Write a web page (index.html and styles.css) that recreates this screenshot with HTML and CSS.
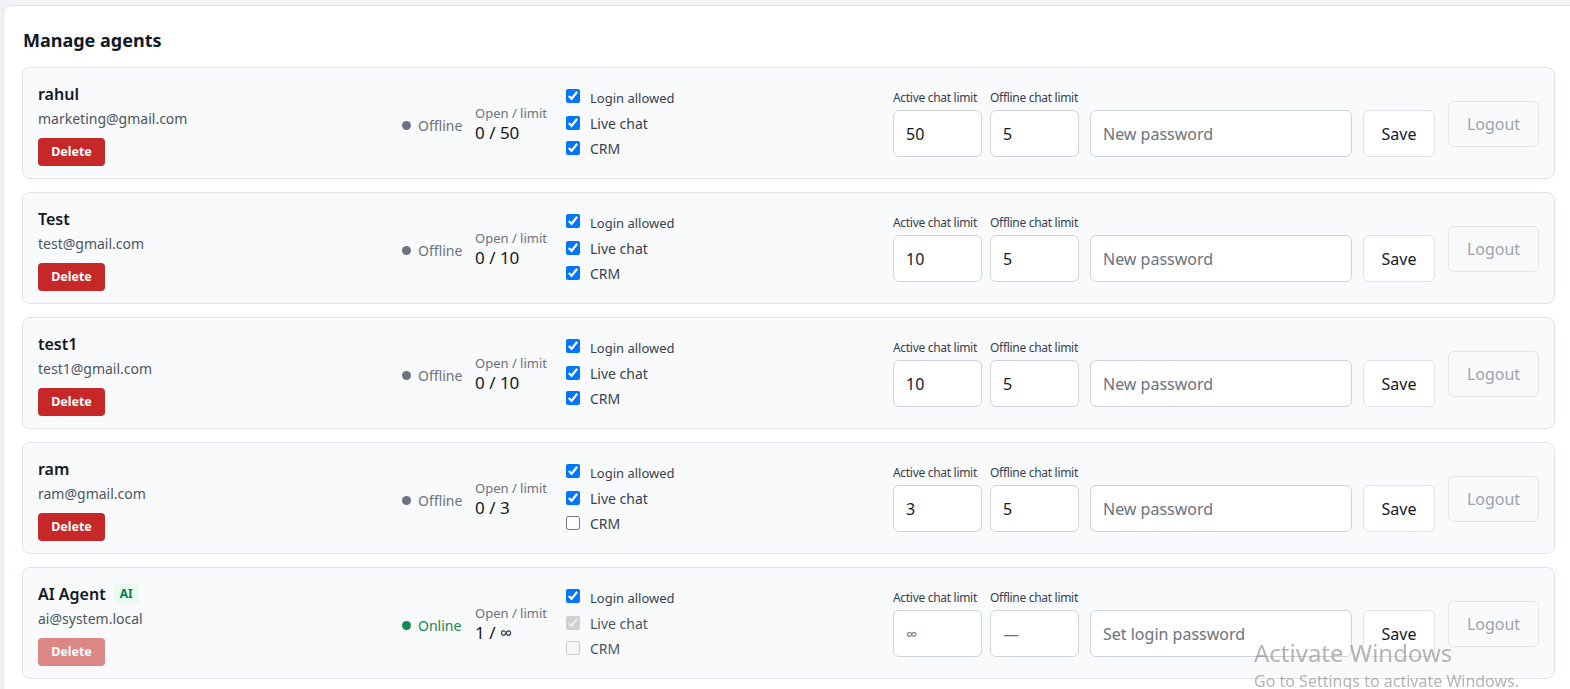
FILE: index.html
```html
<html>
<head>
    <meta charset="utf-8">
    <title>Manage agents</title>
    <link rel="stylesheet" href="styles.css">
</head>
<body>
<div class="panel">
    <h2 class="title">Manage agents</h2>

    <div class="agent">
        <div class="info">
            <div class="name">rahul</div>
            <div class="email">marketing@gmail.com</div>
            <button class="delete">Delete</button>
        </div>
        <div class="status"><span class="dot"></span>Offline</div>
        <div class="load"><div class="load-label">Open / limit</div><div class="load-val">0 / 50</div></div>
        <div class="perms">
            <label class="perm small"><input type="checkbox" checked> Login allowed</label>
            <label class="perm"><input type="checkbox" checked> Live chat</label>
            <label class="perm"><input type="checkbox" checked> CRM</label>
        </div>
        <div class="edit">
            <div class="field"><span class="field-label">Active chat limit</span><input class="box num" value="50"></div>
            <div class="field"><span class="field-label">Offline chat limit</span><input class="box num" value="5"></div>
            <input class="box pass" placeholder="New password">
            <button class="save">Save</button>
        </div>
        <button class="logout" disabled>Logout</button>
    </div>

    <div class="agent">
        <div class="info">
            <div class="name">Test</div>
            <div class="email">test@gmail.com</div>
            <button class="delete">Delete</button>
        </div>
        <div class="status"><span class="dot"></span>Offline</div>
        <div class="load"><div class="load-label">Open / limit</div><div class="load-val">0 / 10</div></div>
        <div class="perms">
            <label class="perm small"><input type="checkbox" checked> Login allowed</label>
            <label class="perm"><input type="checkbox" checked> Live chat</label>
            <label class="perm"><input type="checkbox" checked> CRM</label>
        </div>
        <div class="edit">
            <div class="field"><span class="field-label">Active chat limit</span><input class="box num" value="10"></div>
            <div class="field"><span class="field-label">Offline chat limit</span><input class="box num" value="5"></div>
            <input class="box pass" placeholder="New password">
            <button class="save">Save</button>
        </div>
        <button class="logout" disabled>Logout</button>
    </div>

    <div class="agent">
        <div class="info">
            <div class="name">test1</div>
            <div class="email">test1@gmail.com</div>
            <button class="delete">Delete</button>
        </div>
        <div class="status"><span class="dot"></span>Offline</div>
        <div class="load"><div class="load-label">Open / limit</div><div class="load-val">0 / 10</div></div>
        <div class="perms">
            <label class="perm small"><input type="checkbox" checked> Login allowed</label>
            <label class="perm"><input type="checkbox" checked> Live chat</label>
            <label class="perm"><input type="checkbox" checked> CRM</label>
        </div>
        <div class="edit">
            <div class="field"><span class="field-label">Active chat limit</span><input class="box num" value="10"></div>
            <div class="field"><span class="field-label">Offline chat limit</span><input class="box num" value="5"></div>
            <input class="box pass" placeholder="New password">
            <button class="save">Save</button>
        </div>
        <button class="logout" disabled>Logout</button>
    </div>

    <div class="agent">
        <div class="info">
            <div class="name">ram</div>
            <div class="email">ram@gmail.com</div>
            <button class="delete">Delete</button>
        </div>
        <div class="status"><span class="dot"></span>Offline</div>
        <div class="load"><div class="load-label">Open / limit</div><div class="load-val">0 / 3</div></div>
        <div class="perms">
            <label class="perm small"><input type="checkbox" checked> Login allowed</label>
            <label class="perm"><input type="checkbox" checked> Live chat</label>
            <label class="perm"><input type="checkbox"> CRM</label>
        </div>
        <div class="edit">
            <div class="field"><span class="field-label">Active chat limit</span><input class="box num" value="3"></div>
            <div class="field"><span class="field-label">Offline chat limit</span><input class="box num" value="5"></div>
            <input class="box pass" placeholder="New password">
            <button class="save">Save</button>
        </div>
        <button class="logout" disabled>Logout</button>
    </div>

    <div class="agent">
        <div class="info">
            <div class="name">AI Agent <span class="badge">AI</span></div>
            <div class="email">ai@system.local</div>
            <button class="delete" disabled>Delete</button>
        </div>
        <div class="status online"><span class="dot"></span>Online</div>
        <div class="load"><div class="load-label">Open / limit</div><div class="load-val">1 / &infin;</div></div>
        <div class="perms">
            <label class="perm small"><input type="checkbox" checked> Login allowed</label>
            <label class="perm off"><input type="checkbox" checked disabled> Live chat</label>
            <label class="perm off"><input type="checkbox" disabled> CRM</label>
        </div>
        <div class="edit">
            <div class="field"><span class="field-label">Active chat limit</span><input class="box num muted" value="&infin;" disabled></div>
            <div class="field"><span class="field-label">Offline chat limit</span><input class="box num muted" value="&mdash;" disabled></div>
            <input class="box pass" placeholder="Set login password">
            <button class="save">Save</button>
        </div>
        <button class="logout" disabled>Logout</button>
    </div>
</div>

<div class="watermark">
    <div class="wm-big">Activate Windows</div>
    <div class="wm-small">Go to Settings to activate Windows.</div>
</div>
</body>
</html>
```

FILE: styles.css
```css
* {box-sizing:border-box;}
body {margin:0;background:#f1f2f4;font-family:"Noto Sans","Open Sans",sans-serif;color:#1f2937;overflow:hidden;}

.panel {margin:5px -20px 0 3px;background:#fff;border:1px solid #e4e6ea;border-radius:8px;padding:22px 34px 20px 18px;}
.title {margin:0 0 15px 1px;font-size:18px;font-weight:700;color:#111827;line-height:24px;}

.agent {display:flex;align-items:center;background:#f9fafb;border:1px solid #e3e5e9;border-radius:8px;padding:15px 15px 13px 15px;margin-bottom:13px;height:112px;}

.info {width:364px;flex:none;}
.name {font-size:16px;font-weight:600;line-height:22px;color:#111827;display:flex;align-items:center;gap:8px;}
.email {font-size:14px;line-height:20px;margin-top:4px;color:#4b5563;}
.delete {margin-top:9px;width:67px;height:28px;border:0;border-radius:4px;background:#c62828;color:#fff;font-family:inherit;font-size:12.5px;font-weight:700;}
.delete:disabled {opacity:.55;}
.badge {font-size:12px;font-weight:700;color:#0b7a4b;background:#e8fbf0;padding:1px 6px;line-height:18px;}

.status {width:73px;flex:none;display:flex;align-items:center;gap:7px;font-size:14px;color:#6b7280;margin-top:2px;}
.dot {width:9px;height:9px;border-radius:50%;background:#6b7280;}
.status.online {color:#198754;}
.status.online .dot {background:#198754;}

.load {width:91px;flex:none;}
.load-label {font-size:13px;color:#6b7280;line-height:18px;}
.load-val {font-size:17px;line-height:22px;color:#111827;}

.perms {display:flex;flex-direction:column;gap:4px;margin-top:-2px;}
.perm {display:flex;align-items:center;gap:10px;font-size:14px;color:#374151;line-height:21px;}
.perm.small {font-size:13px;}
.perm input {margin:0;width:14px;height:14px;}
.perm.small input {margin-top:-4px;}
.perm.off {color:#4b5563;}

.edit {margin-left:auto;display:flex;align-items:flex-end;gap:11px;}
.field {display:flex;flex-direction:column;gap:5px;margin-right:-3px;}
.field-label {font-size:12px;color:#374151;line-height:14px;letter-spacing:-.3px;}
.box {height:47px;border:1px solid #cfd4dc;border-radius:6px;background:#fff;font-family:inherit;font-size:16px;color:#111827;padding:0 12px;}
.box::placeholder {color:#6b7280;}
.num {width:89px;}
.muted {color:#6b7280;background:#fff;}
.pass {width:262px;margin-left:3px;}
.save {width:72px;height:47px;border:1px solid #dfe2e7;border-radius:6px;background:#fff;font-family:inherit;font-size:16px;color:#111827;}
.logout {margin-left:13px;width:91px;height:46px;border:1px solid #e3e5e9;border-radius:6px;background:transparent;font-family:inherit;font-size:16px;color:#9ca3af;}

.watermark {position:fixed;left:1254px;top:638px;color:rgba(120,120,120,.55);pointer-events:none;}
.wm-big {font-size:24px;line-height:30px;}
.wm-small {font-size:16px;line-height:26px;}
```
